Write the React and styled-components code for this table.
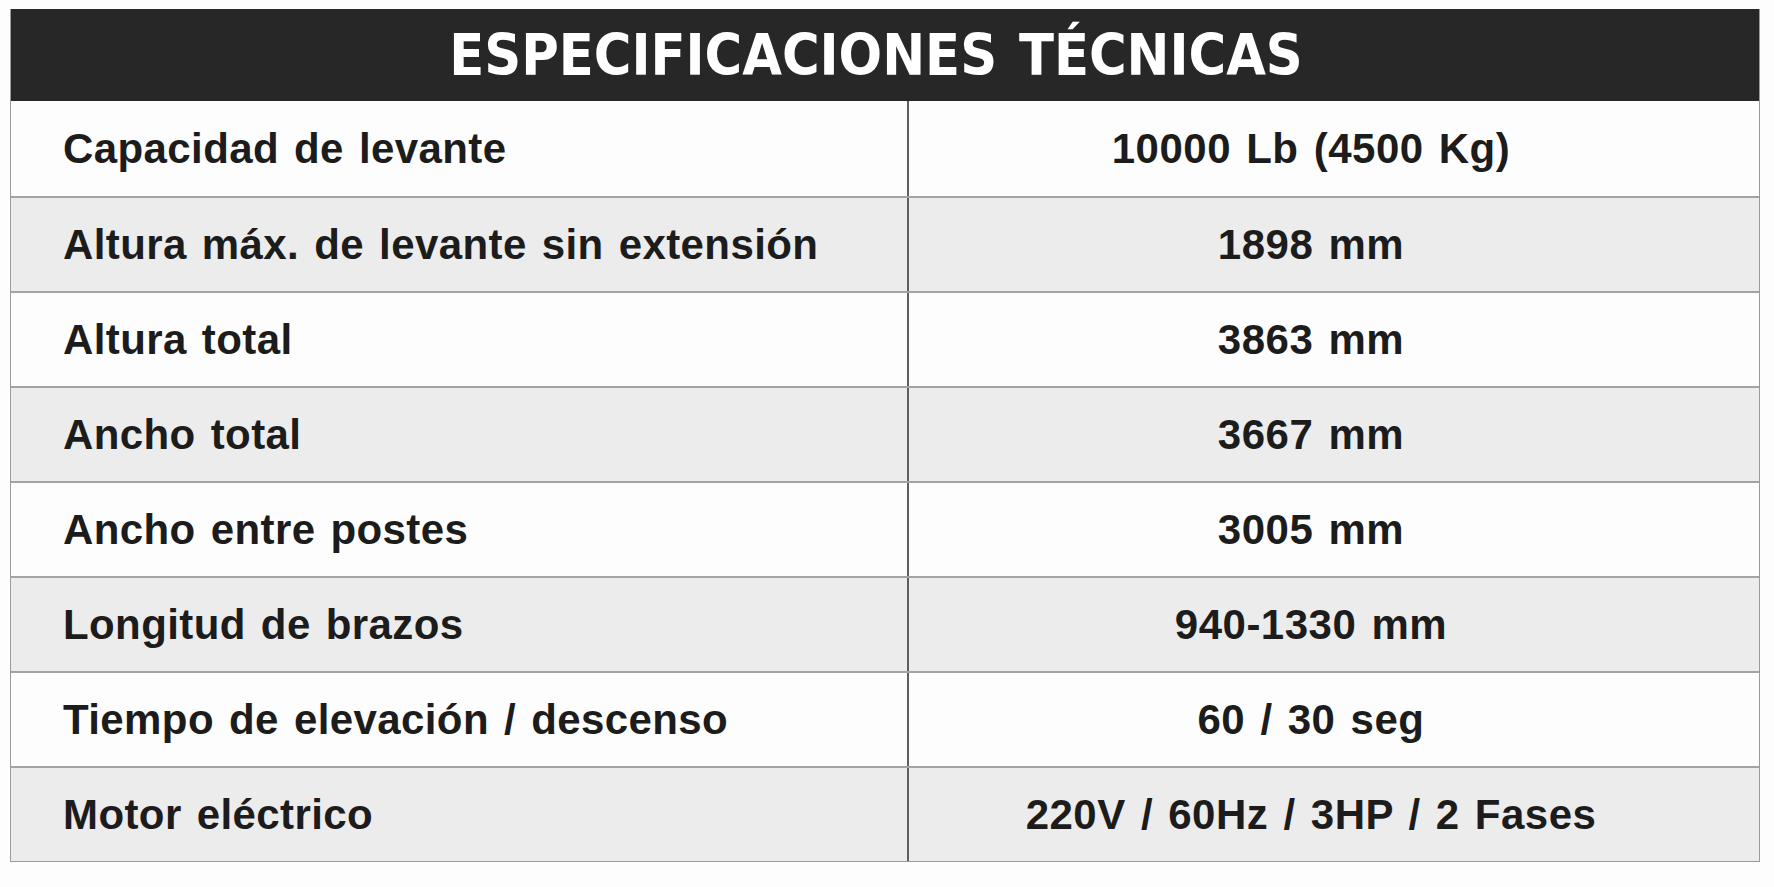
import React from 'react';
import styled, { createGlobalStyle } from 'styled-components';

const GlobalStyle = createGlobalStyle`
    html, body {
        margin: 0;
        padding: 0;
        background: #fdfdfd;
    }
`;

const Page = styled.div`
    padding: 9px 14px 26px 10px;
`;

const Table = styled.div`
    width: 1750px;
    border: 1px solid #9a9a9a;
    border-top: none;
    box-sizing: border-box;
`;

const Title = styled.h1`
    margin: 0;
    height: 92px;
    display: flex;
    align-items: center;
    justify-content: center;
    padding-right: 18px;
    background: #272727;
    color: #ffffff;
    font-family: "DejaVu Sans Condensed", "Liberation Sans", Arial, sans-serif;
    font-stretch: condensed;
    font-weight: 700;
    font-size: 57px;
    letter-spacing: 0px;
    word-spacing: 4px;
`;

const Row = styled.div`
    display: grid;
    grid-template-columns: 898px 1fr;
    height: 95px;
    box-sizing: border-box;
    background: ${p => (p.$shaded ? '#ececec' : '#fdfdfd')};
    border-top: ${p => (p.$first ? 'none' : '2px solid #a3a3a3')};
`;

const Cell = styled.div`
    display: flex;
    align-items: center;
    font-family: "Liberation Sans", Arial, sans-serif;
    font-weight: 700;
    font-size: 42px;
    color: #1c1c1c;
    word-spacing: 3px;
`;

const Label = styled(Cell)`
    padding-left: 52px;
    letter-spacing: 0.4px;
    border-right: 2px solid #5e5e5e;
`;

const Value = styled(Cell)`
    justify-content: center;
    padding-right: 46px;
    letter-spacing: 0.5px;
`;

const specs = [
    ['Capacidad de levante', '10000 Lb (4500 Kg)'],
    ['Altura máx. de levante sin extensión', '1898 mm'],
    ['Altura total', '3863 mm'],
    ['Ancho total', '3667 mm'],
    ['Ancho entre postes', '3005 mm'],
    ['Longitud de brazos', '940-1330 mm'],
    ['Tiempo de elevación / descenso', '60 / 30 seg'],
    ['Motor eléctrico', '220V / 60Hz / 3HP / 2 Fases'],
];

function App () {
    return (
        <Page>
            <GlobalStyle />
            <Table>
                <Title>ESPECIFICACIONES TÉCNICAS</Title>
                {specs.map(([label, value], i) => (
                    <Row key={i} $shaded={i % 2 === 1} $first={i === 0}>
                        <Label>{label}</Label>
                        <Value>{value}</Value>
                    </Row>
                ))}
            </Table>
        </Page>
    );
}

export default App;
